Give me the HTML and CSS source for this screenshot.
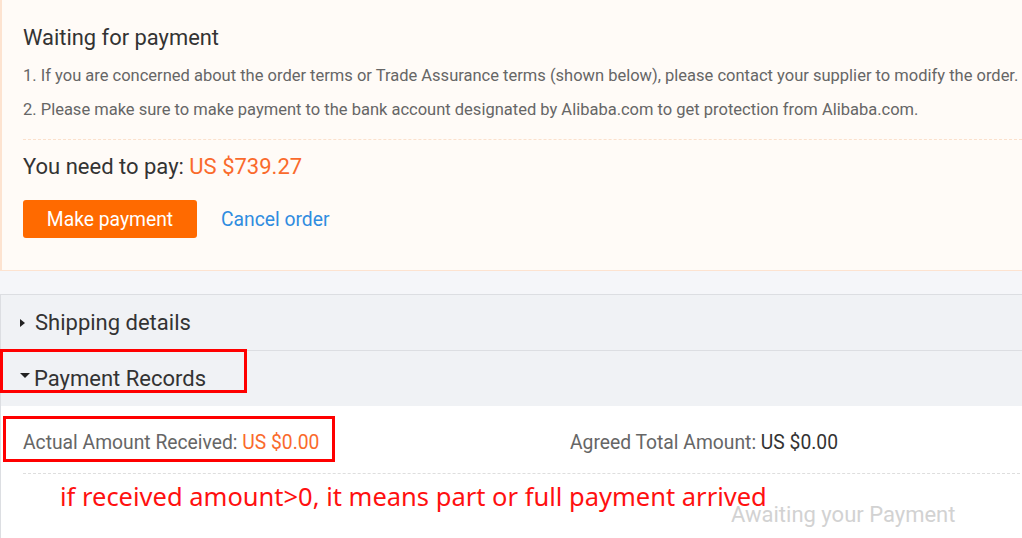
FILE: index.html
```html
<!DOCTYPE html>
<html lang="en">
<head>
    <meta charset="UTF-8">
    <meta name="viewport" content="width=device-width, initial-scale=1.0">
    <title>Order Status</title>
    <link rel="stylesheet" href="styles.css">
</head>
<body>

    <div class="status">
        <h2 class="status-title">Waiting for payment</h2>
        <ol class="tips">
            <li>1. If you are concerned about the order terms or Trade Assurance terms (shown below), please contact your supplier to modify the order.</li>
            <li>2. Please make sure to make payment to the bank account designated by Alibaba.com to get protection from Alibaba.com.</li>
        </ol>
        <p class="to-pay">You need to pay: <span class="price">US $739.27</span></p>
        <div class="actions">
            <button type="button" class="btn-pay">Make payment</button>
            <a href="#" class="cancel">Cancel order</a>
        </div>
    </div>

    <div class="gap"></div>

    <div class="sections">
        <div class="section-head">
            <span class="arrow-right"></span>Shipping details
        </div>
        <div class="section-head">
            <span class="arrow-down"></span>Payment Records
            <div class="mark mark-head"></div>
        </div>
        <div class="records">
            <div class="amount-row">
                <div class="amount-cell">
                    Actual Amount Received: <span class="price">US $0.00</span>
                    <div class="mark mark-amount"></div>
                </div>
                <div class="amount-cell agreed">Agreed Total Amount: <span class="dark">US $0.00</span></div>
            </div>
            <div class="records-foot">
                <p class="note">if received amount&gt;0, it means part or full payment arrived</p>
                <p class="awaiting">Awaiting your Payment</p>
            </div>
        </div>
    </div>

</body>
</html>
```

FILE: styles.css
```css
body {
    font-family: Roboto, 'Liberation Sans', Arial, sans-serif;
    background-color: #f5f6f9;
    margin: 0;
    padding: 0;
    color: #333;
}

.status {
    background-color: #fffbf7;
    border-left: 2px solid #fde3d0;
    border-bottom: 1px solid #fde3d0;
    padding: 24px 0 32px 21px;
}

.status-title {
    margin: 0;
    font-size: 21.9px;
    font-weight: normal;
    line-height: 28px;
    color: #333;
}

.tips {
    list-style: none;
    margin: 7px 0 0;
    padding: 0 0 12px;
    border-bottom: 1px dashed #fbe0cc;
    font-size: 16.5px;
    line-height: 34px;
    color: #666;
    white-space: nowrap;
}

.to-pay {
    margin: 12px 0 0;
    font-size: 22px;
    line-height: 30px;
    color: #333;
}

.price {
    color: #fa6a2c;
}

.actions {
    display: flex;
    align-items: center;
    gap: 24px;
    margin-top: 18px;
}

.btn-pay {
    background-color: #ff6a00;
    color: #fff;
    border: none;
    border-radius: 3px;
    height: 38px;
    width: 174px;
    font-family: inherit;
    font-size: 19.3px;
    cursor: pointer;
}

.cancel {
    color: #2f8ce0;
    text-decoration: none;
    font-size: 19.3px;
}

.gap {
    height: 23px;
}

.sections {
    border-left: 1px solid #dcdee2;
}

.section-head {
    position: relative;
    display: flex;
    align-items: center;
    height: 55px;
    border-top: 1px solid #dcdee2;
    background-color: #f0f2f5;
    padding-left: 19px;
    font-size: 22px;
    color: #333;
}

.arrow-right {
    width: 0;
    height: 0;
    border-top: 4px solid transparent;
    border-bottom: 4px solid transparent;
    border-left: 5px solid #222;
    margin-right: 10px;
}

.arrow-down {
    width: 0;
    height: 0;
    border-left: 5px solid transparent;
    border-right: 5px solid transparent;
    border-top: 5px solid #222;
    margin-right: 4px;
    margin-top: -6px;
}

.records {
    background-color: #fff;
    padding: 0 2px 0 22px;
}

.amount-row {
    display: flex;
    padding: 25px 0 18px;
    border-bottom: 1px dashed #dedede;
    font-size: 19.3px;
    line-height: 24px;
    color: #666;
}

.amount-cell {
    position: relative;
    flex: none;
    width: 547px;
}

.agreed {
    flex: 1;
    width: auto;
}

.dark {
    color: #333;
}

.records-foot {
    position: relative;
    height: 80px;
}

.note {
    position: absolute;
    left: 37px;
    top: 6px;
    margin: 0;
    font-family: 'Noto Sans', 'Open Sans', sans-serif;
    font-size: 25.5px;
    line-height: 32px;
    color: #ff1010;
}

.awaiting {
    margin: 0;
    padding: 28px 0 0 708px;
    font-size: 22px;
    line-height: 26px;
    color: #d2d2d2;
}

/* red annotation boxes drawn over the screenshot */
.mark {
    position: absolute;
    border: 3.5px solid #ff0000;
    box-sizing: border-box;
}

.mark-head {
    left: -1px;
    top: -2px;
    width: 247px;
    height: 44px;
}

.mark-amount {
    left: -20px;
    top: -15px;
    width: 332px;
    height: 46px;
}
```
